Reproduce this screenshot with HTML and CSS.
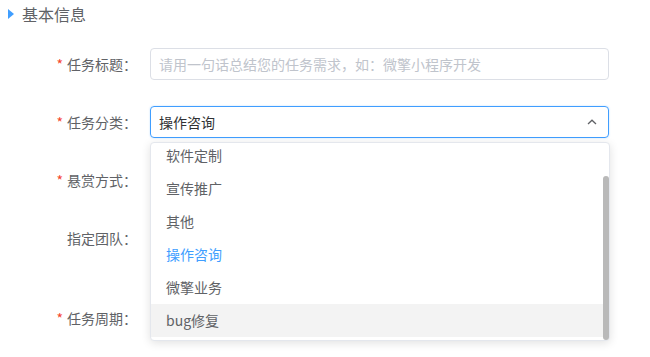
FILE: index.html
```html
<!DOCTYPE html>
<html lang="zh-CN">
<head>
    <meta charset="UTF-8">
    <title>基本信息</title>
    <link rel="stylesheet" href="styles.css">
</head>
<body>
    <div class="section-title">
        <span class="triangle"></span>
        <span>基本信息</span>
    </div>

    <form class="form">
        <div class="form-item">
            <label class="form-label required">任务标题：</label>
            <div class="form-content">
                <input type="text" class="input" placeholder="请用一句话总结您的任务需求，如：微擎小程序开发">
            </div>
        </div>

        <div class="form-item">
            <label class="form-label required">任务分类：</label>
            <div class="form-content">
                <div class="select">
                    <div class="select-input">
                        <span>操作咨询</span>
                        <svg class="arrow" width="10" height="6" viewBox="0 0 10 6">
                            <path d="M1 5 L5 1.2 L9 5" fill="none" stroke="#606266" stroke-width="1.3"/>
                        </svg>
                    </div>
                    <!-- 下拉菜单（已滚动到底部） -->
                    <div class="dropdown">
                        <div class="dropdown-wrap">
                            <ul class="dropdown-list">
                                <li class="dropdown-item">软件定制</li>
                                <li class="dropdown-item">宣传推广</li>
                                <li class="dropdown-item">其他</li>
                                <li class="dropdown-item selected">操作咨询</li>
                                <li class="dropdown-item">微擎业务</li>
                                <li class="dropdown-item hover">bug修复</li>
                            </ul>
                        </div>
                        <div class="scroll-thumb"></div>
                    </div>
                </div>
            </div>
        </div>

        <div class="form-item">
            <label class="form-label required">悬赏方式：</label>
            <div class="form-content"></div>
        </div>

        <div class="form-item tall">
            <label class="form-label">指定团队：</label>
            <div class="form-content"></div>
        </div>

        <div class="form-item">
            <label class="form-label required">任务周期：</label>
            <div class="form-content"></div>
        </div>
    </form>
</body>
</html>
```

FILE: styles.css
```css
body {
    margin: 0;
    font-family: "Noto Sans CJK SC", "Noto Sans", sans-serif;
    font-size: 14px;
    color: #606266;
    background-color: white;
}
.section-title {
    display: flex;
    align-items: center;
    height: 28px;
    padding-left: 8px;
    font-size: 16px;
    color: #606266;
}
.triangle {
    width: 0;
    height: 0;
    border-top: 5px solid transparent;
    border-bottom: 5px solid transparent;
    border-left: 6px solid #409eff;
    margin-right: 8px;
}
.form {
    margin-top: 20px;
}
.form-item {
    display: flex;
    height: 32px;
    margin-bottom: 26px;
}
.form-item.tall {
    height: 54px;
}
.form-label {
    width: 150px;
    box-sizing: border-box;
    padding-right: 13px;
    text-align: right;
    line-height: 32px;
    color: #606266;
}
.form-label.required::before {
    content: "*";
    color: #f5462d;
    margin-right: 4px;
}
.form-content {
    width: 459px;
}
.input {
    width: 100%;
    height: 32px;
    box-sizing: border-box;
    border: 1px solid #dcdfe6;
    border-radius: 4px;
    padding: 0 8px;
    font-family: inherit;
    font-size: 14px;
    color: #303133;
    outline: none;
}
.input::placeholder {
    color: #c0c4cc;
}
.select {
    position: relative;
}
.select-input {
    display: flex;
    align-items: center;
    justify-content: space-between;
    height: 32px;
    box-sizing: border-box;
    border: 1px solid #409eff;
    border-radius: 4px;
    padding: 0 11px 0 8px;
    color: #303133;
    box-shadow: 0 0 2px rgba(64,158,255,0.35);
}
.dropdown {
    position: absolute;
    top: 36px;
    left: 0;
    width: 460px;
    height: 199px;
    box-sizing: border-box;
    background-color: white;
    border: 1px solid #e4e7ed;
    border-radius: 4px;
    box-shadow: 0 2px 10px rgba(0,0,0,0.12);
    z-index: 10;
}
.dropdown-wrap {
    height: 100%;
    overflow: hidden;
    display: flex;
    flex-direction: column;
    justify-content: flex-end;
}
.dropdown-list {
    flex-shrink: 0;
    list-style: none;
    margin: 0;
    padding: 6px 0 3px;
}
.dropdown-item {
    height: 33px;
    line-height: 33px;
    padding-left: 15px;
    margin-right: 6px;
    color: #606266;
}
.dropdown-item.selected {
    color: #409eff;
}
.dropdown-item.hover {
    background-color: #f3f3f3;
}
.scroll-thumb {
    position: absolute;
    right: 0;
    bottom: 0;
    width: 6px;
    height: 164px;
    border-radius: 3px;
    background-color: #b9b9b9;
}
```
